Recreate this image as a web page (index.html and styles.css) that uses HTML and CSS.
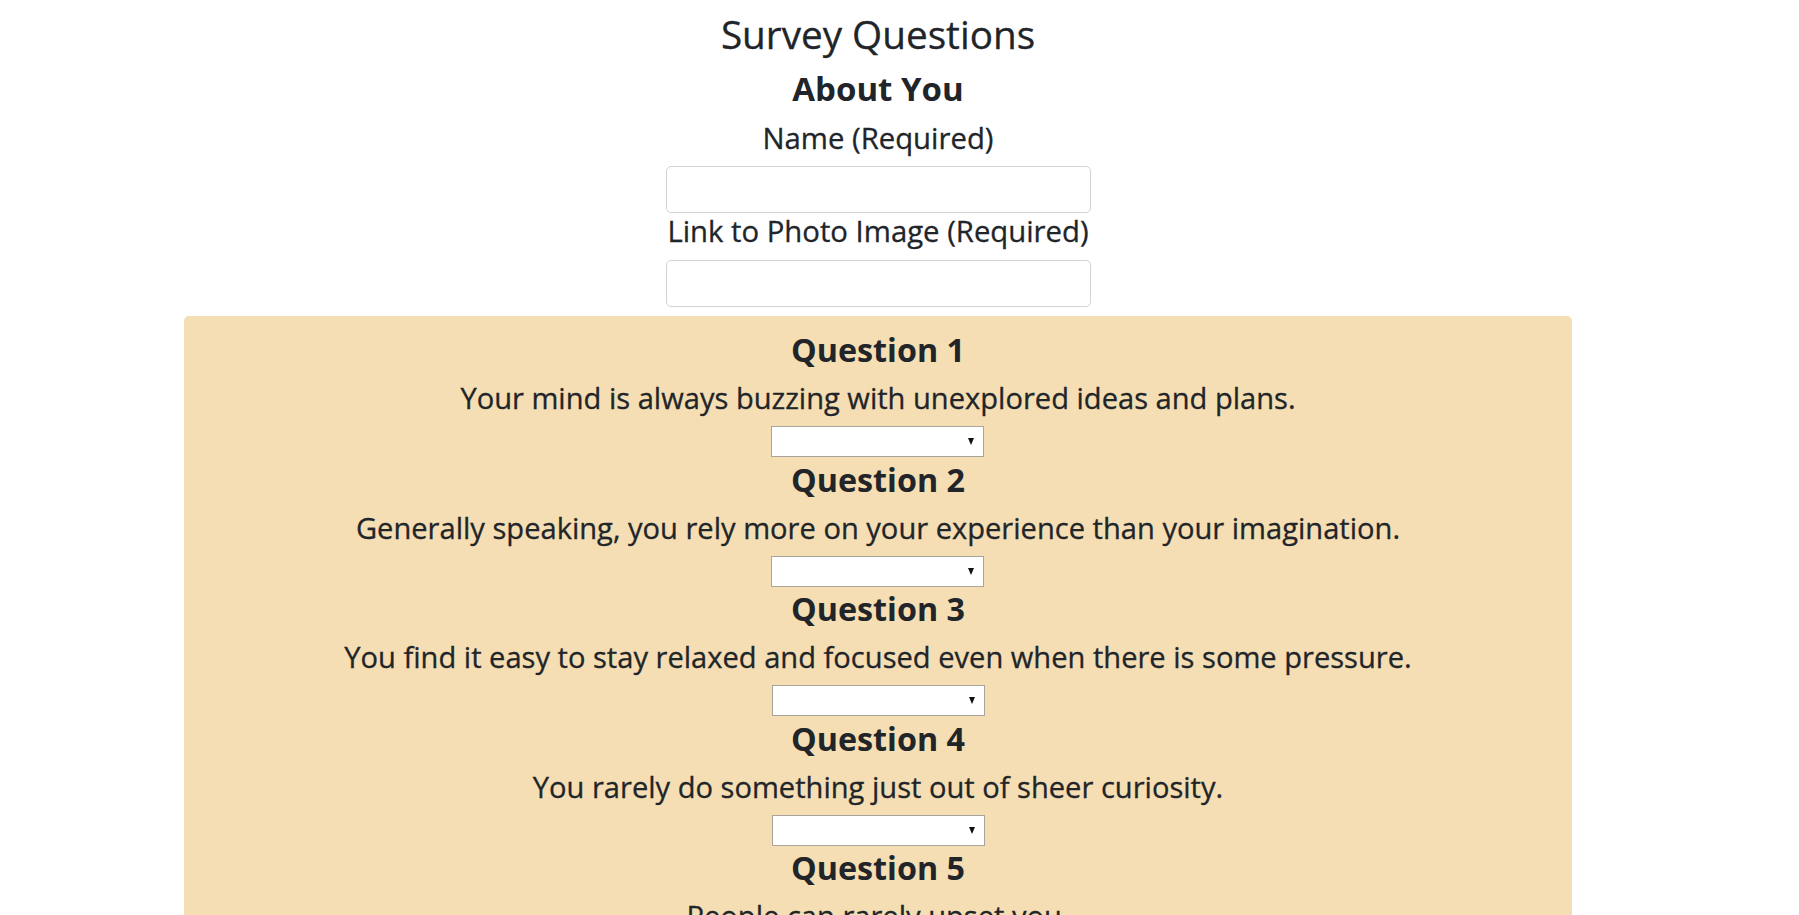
FILE: index.html
```html
<!DOCTYPE html>
<html lang="en">
<head>
<meta charset="utf-8">
<title>Survey</title>
<link rel="stylesheet" href="styles.css">
</head>
<body>
<div class="page">
  <div class="container">
    <h2 class="title">Survey Questions</h2>
    <h3 class="section">About You</h3>
    <div class="field">
      <label class="field-label" for="name">Name (Required)</label>
      <input class="field-input" id="name" type="text">
    </div>
    <div class="field">
      <label class="field-label" for="photo">Link to Photo Image (Required)</label>
      <input class="field-input" id="photo" type="text">
    </div>
    <div class="questions">
      <div class="question">
        <h3 class="q-title">Question 1</h3>
        <p class="q-text">Your mind is always buzzing with unexplored ideas and plans.</p>
        <div class="select-wrap"><select class="answer"><option></option><option>1 (Strongly Disagree)</option><option>2</option><option>3</option><option>4</option><option>5 (Strongly Agree)</option></select></div>
      </div>
      <div class="question">
        <h3 class="q-title">Question 2</h3>
        <p class="q-text">Generally speaking, you rely more on your experience than your imagination.</p>
        <div class="select-wrap"><select class="answer"><option></option><option>1 (Strongly Disagree)</option><option>2</option><option>3</option><option>4</option><option>5 (Strongly Agree)</option></select></div>
      </div>
      <div class="question">
        <h3 class="q-title">Question 3</h3>
        <p class="q-text">You find it easy to stay relaxed and focused even when there is some pressure.</p>
        <div class="select-wrap"><select class="answer"><option></option><option>1 (Strongly Disagree)</option><option>2</option><option>3</option><option>4</option><option>5 (Strongly Agree)</option></select></div>
      </div>
      <div class="question">
        <h3 class="q-title">Question 4</h3>
        <p class="q-text">You rarely do something just out of sheer curiosity.</p>
        <div class="select-wrap"><select class="answer"><option></option><option>1 (Strongly Disagree)</option><option>2</option><option>3</option><option>4</option><option>5 (Strongly Agree)</option></select></div>
      </div>
      <div class="question">
        <h3 class="q-title">Question 5</h3>
        <p class="q-text">People can rarely upset you.</p>
        <div class="select-wrap"><select class="answer"><option></option><option>1 (Strongly Disagree)</option><option>2</option><option>3</option><option>4</option><option>5 (Strongly Agree)</option></select></div>
      </div>
    </div>
  </div>
</div>
</body>
</html>
```
FILE: styles.css
```css
html, body {
  margin: 0;
  padding: 0;
  background: #ffffff;
}
body {
  font-family: "Open Sans", "Noto Sans", sans-serif;
  color: #212529;
}
.page {
  padding: 10px 0 0 184px;
}
.container {
  width: 1388px;
  display: flex;
  flex-direction: column;
  align-items: center;
  text-align: center;
}
.title {
  margin: 0 0 10px;
  font-size: 38.7px;
  line-height: 48px;
  font-weight: 400;
  -webkit-text-stroke: 0.3px currentColor;
}
.section {
  margin: 0 0 10px;
  font-size: 33px;
  line-height: 42px;
  font-weight: 700;
}
.field {
  display: flex;
  flex-direction: column;
  align-items: center;
  width: 425px;
}
.field-label {
  display: block;
  margin: 0 0 10px;
  font-size: 29.3px;
  line-height: 36px;
  font-weight: 400;
  -webkit-text-stroke: 0.3px currentColor;
}
.field-input {
  box-sizing: border-box;
  width: 425px;
  height: 47px;
  margin: 0;
  border: 1px solid #ced4da;
  border-radius: 5px;
  background: #fff;
  font: inherit;
  font-size: 20px;
}
.field + .field .field-label {
  margin-bottom: 11px;
}
.field + .field {
  margin-bottom: 9px;
}
.questions {
  align-self: stretch;
  background: #f5deb3;
  border-radius: 5px;
  padding: 12px 0 40px;
  display: flex;
  flex-direction: column;
  align-items: center;
  gap: 0.6px;
}
.question {
  display: flex;
  flex-direction: column;
  align-items: center;
}
.q-title {
  margin: 0 0 10px;
  font-size: 32.3px;
  line-height: 42px;
  font-weight: 700;
}
.q-text {
  margin: 0 0 10px;
  font-size: 29.1px;
  line-height: 36px;
  font-weight: 400;
  -webkit-text-stroke: 0.3px currentColor;
}
.select-wrap {
  position: relative;
  width: 213px;
  height: 31px;
}
.answer {
  -webkit-appearance: none;
  appearance: none;
  box-sizing: border-box;
  width: 213px;
  height: 31px;
  margin: 0;
  border: 1px solid #a9a59c;
  border-radius: 0;
  background: #fff;
  font-family: inherit;
  font-size: 16px;
  color: #212529;
}
.select-wrap::after {
  content: "";
  position: absolute;
  right: 10px;
  top: 12px;
  width: 0;
  height: 0;
  border-left: 3.5px solid transparent;
  border-right: 3.5px solid transparent;
  border-top: 7px solid #111;
  pointer-events: none;
}
```
